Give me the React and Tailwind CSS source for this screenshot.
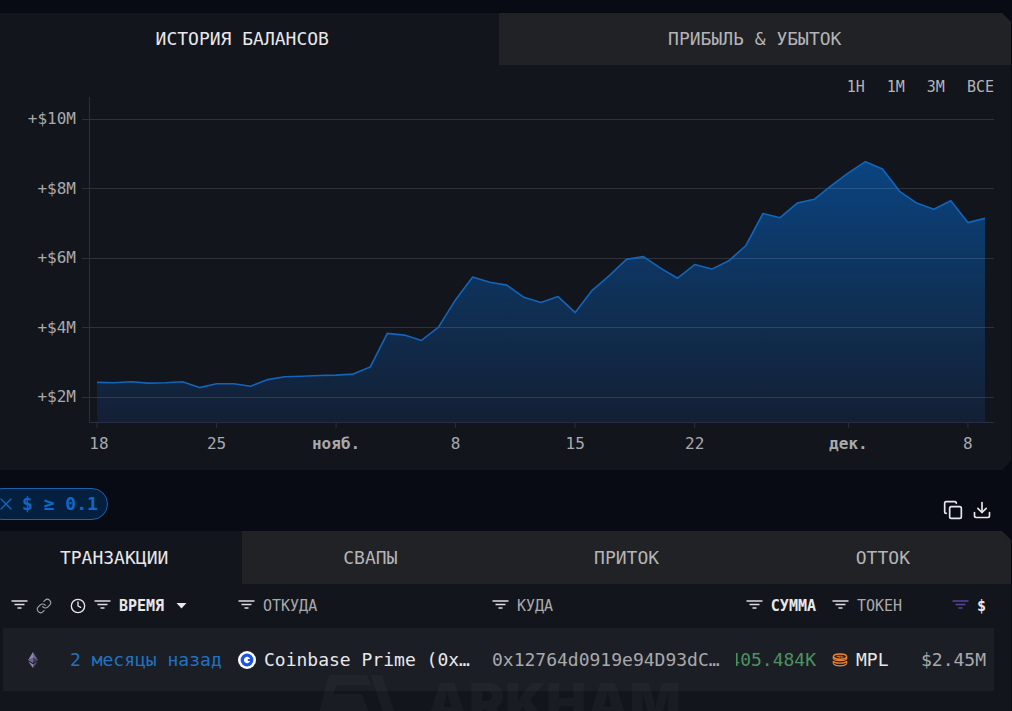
import React, { useState } from 'react';
import { Clock, Copy, Download, Link, X } from 'lucide-react';

// Daily balance in millions of dollars
const BALANCES = [
  2.42, 2.41, 2.44, 2.4, 2.41, 2.44, 2.27, 2.38, 2.38, 2.31, 2.5, 2.58, 2.6, 2.62, 2.63, 2.66, 2.86, 3.83,
  3.78, 3.63, 4.01, 4.8, 5.45, 5.3, 5.22, 4.87, 4.72, 4.89, 4.43, 5.07, 5.49, 5.96, 6.04, 5.71, 5.42, 5.81,
  5.68, 5.92, 6.36, 7.28, 7.16, 7.58, 7.69, 8.08, 8.45, 8.77, 8.56, 7.92, 7.58, 7.4, 7.65, 7.02, 7.14,
];

const X_TICKS = [
  { day: 0, label: '18', shift: 2 },
  { day: 7, label: '25' },
  { day: 14, label: 'нояб.', bold: true },
  { day: 21, label: '8' },
  { day: 28, label: '15' },
  { day: 35, label: '22' },
  { day: 44, label: 'дек.', bold: true },
  { day: 51, label: '8' },
];

const Y_TICKS = [10, 8, 6, 4, 2];
const RANGES = ['1Н', '1М', '3М', 'ВСЕ'];

const LEFT = 111;
const BOTTOM = 325;
const dayX = (day) => LEFT + (day * 888) / 52;
const valueY = (value) => 22 + (10 - value) * 34.75;

function BalanceChart() {
  const line = BALANCES.map((v, i) => `${dayX(i).toFixed(1)},${valueY(v).toFixed(1)}`).join(' ');
  const area = `${LEFT},${BOTTOM} ${line} ${dayX(52)},${BOTTOM}`;

  return (
    <svg viewBox="0 0 1025 373" className="block w-full" role="img" aria-label="История балансов">
      <defs>
        <linearGradient id="balance" x1="0" y1="0" x2="0" y2="1">
          <stop offset="0" stopColor="#0a4480" />
          <stop offset="0.5" stopColor="#0f3158" />
          <stop offset="1" stopColor="#131f34" />
        </linearGradient>
      </defs>
      <polygon points={area} fill="url(#balance)" />
      {Y_TICKS.map((tick) => (
        <g key={tick}>
          <line x1="96" x2="1008" y1={Math.floor(valueY(tick)) + 0.5} y2={Math.floor(valueY(tick)) + 0.5} stroke="#ffffff" strokeOpacity="0.12" />
          <text x="90" y={valueY(tick) + 5} textAnchor="end" fontSize="16" fill="#a8a9ac">+${tick}M</text>
        </g>
      ))}
      <polyline points={line} fill="none" stroke="#1165ba" strokeWidth="1.6" strokeLinejoin="round" />
      <path d="M103.5 0V325.5H1008" fill="none" stroke="#2b2d44" />
      {X_TICKS.map((tick) => (
        <g key={tick.day}>
          <line x1={dayX(tick.day)} x2={dayX(tick.day)} y1="326" y2="331" stroke="#2b2d3c" />
          <text
            x={dayX(tick.day) + (tick.shift || 0)}
            y="352"
            textAnchor="middle"
            fontSize="16"
            fontWeight={tick.bold ? 700 : 400}
            fill="#a8a9ac"
          >
            {tick.label}
          </text>
        </g>
      ))}
    </svg>
  );
}

function Tabs({ tabs, active, onChange, className }) {
  return (
    <div role="tablist" className={`flex ${className}`}>
      {tabs.map((tab, i) => (
        <button
          key={tab}
          type="button"
          role="tab"
          aria-selected={i === active}
          onClick={() => onChange(i)}
          className={`flex-1 text-lg leading-6 ${i === active ? 'text-[#e8e8ea]' : 'bg-[#212226] text-[#b4b4b6]'}`}
        >
          {tab}
        </button>
      ))}
    </div>
  );
}

function FilterButton({ label, className = 'text-[#dcdde0]' }) {
  return (
    <button type="button" aria-label={`Фильтр: ${label}`} className={`shrink-0 ${className}`}>
      <svg width="17" height="14" viewBox="0 0 17 14" fill="none" stroke="currentColor" strokeWidth="1.7">
        <path d="M0.5 2H16.5M3.5 5.5H13.5M6.5 9H10.5" />
      </svg>
    </button>
  );
}

function EthIcon() {
  return (
    <svg width="10" height="16" viewBox="0 0 10 16" role="img" aria-label="Ethereum">
      <path d="M5 0L0 8.2L5 6z" fill="#8f88ae" />
      <path d="M5 0L10 8.2L5 6z" fill="#6d6690" />
      <path d="M0 8.2L5 6V11z" fill="#6d6690" />
      <path d="M10 8.2L5 6V11z" fill="#453f66" />
      <path d="M0.3 9.4L5 12.2V16z" fill="#8f88ae" />
      <path d="M9.7 9.4L5 12.2V16z" fill="#5c557d" />
    </svg>
  );
}

function CoinbaseIcon() {
  return (
    <svg width="18" height="18" viewBox="0 0 18 18" className="shrink-0" aria-hidden="true">
      <circle cx="9" cy="9" r="9" fill="#ffffff" />
      <circle cx="9" cy="9" r="6.4" fill="#1a55e3" />
      <path d="M12.1 8A3.2 3.2 0 1 0 12.1 10H9.8V8z" fill="#ffffff" />
    </svg>
  );
}

function MapleIcon() {
  return (
    <svg width="16" height="14" viewBox="0 0 16 14" className="shrink-0" fill="none" stroke="#ee8433" aria-hidden="true">
      <ellipse cx="8" cy="3.6" rx="6.6" ry="2.7" strokeWidth="1.5" />
      <path d="M4.5 3.2H7.2V4.8M9 2.6V4H11.5" strokeWidth="1.1" />
      <path d="M1.4 5.6C2.4 8.4 13.6 8.4 14.6 5.6M1.4 8C2.4 10.8 13.6 10.8 14.6 8M1.4 10.4C2.4 13.6 13.6 13.6 14.6 10.4" strokeWidth="1.3" />
      <path d="M1.3 4V6M14.7 4V6M1.3 8V10.6M14.7 8V10.6" strokeWidth="1.2" />
    </svg>
  );
}

function Watermark() {
  return (
    <div aria-hidden="true" className="pointer-events-none absolute top-[144px] left-[332px] flex items-start gap-6 text-[#1a1c24]">
      <svg width="84" height="60" viewBox="0 0 84 60" fill="currentColor">
        <path d="M12 0H49L53 10H19L15 19H44L60 60H46L39 39H18L11 60H-4L9 6z" />
        <path d="M53 0H64L84 60H72z" />
      </svg>
      <span className="font-['Inter',sans-serif] text-[54px] leading-[56px] font-black">ARKHAM</span>
    </div>
  );
}

function TransactionsTable() {
  return (
    <table className="relative ml-[17px] w-[calc(100%-34px)] table-fixed border-collapse text-left whitespace-nowrap">
      <colgroup>
        <col className="w-[59px]" />
        <col className="w-[168px]" />
        <col className="w-[254px]" />
        <col />
        <col className="w-[88px]" />
        <col className="w-[87px]" />
        <col className="w-[83px]" />
      </colgroup>
      <thead className="text-[15px] leading-5 text-[#a8a9ac]">
        <tr className="h-11">
          <th className="pl-2 font-normal">
            <div className="flex items-center gap-2">
              <FilterButton label="сеть" />
              <Link size={16} strokeWidth={1.6} aria-label="Сеть" />
            </div>
          </th>
          <th className="pl-2 font-bold text-[#e8e8ea]">
            <div className="flex items-center gap-2">
              <Clock size={16} aria-hidden="true" />
              <FilterButton label="время" />
              <span>ВРЕМЯ</span>
              <svg width="11" height="6" viewBox="0 0 11 6" fill="currentColor" className="ml-1" aria-hidden="true">
                <path d="M0.5 0H10.5L5.5 5.5z" />
              </svg>
            </div>
          </th>
          <th className="pl-2 font-normal">
            <div className="flex items-center gap-2">
              <FilterButton label="откуда" />
              <span>ОТКУДА</span>
            </div>
          </th>
          <th className="pl-2 font-normal">
            <div className="flex items-center gap-2">
              <FilterButton label="куда" />
              <span>КУДА</span>
            </div>
          </th>
          <th className="pr-2 font-bold text-[#e8e8ea]">
            <div className="flex items-center justify-end gap-2">
              <FilterButton label="сумма" />
              <span>СУММА</span>
            </div>
          </th>
          <th className="pl-2 font-normal">
            <div className="flex items-center gap-2">
              <FilterButton label="токен" />
              <span>ТОКЕН</span>
            </div>
          </th>
          <th className="pr-2 font-bold text-[#e8e8ea]">
            <div className="flex items-center justify-end gap-2">
              <FilterButton label="стоимость" className="text-[#5a449c]" />
              <span>$</span>
            </div>
          </th>
        </tr>
      </thead>
      <tbody className="text-lg leading-6 text-[#a8a9ac]">
        <tr className="h-[63px] bg-white/4">
          <td>
            <div className="flex justify-center">
              <EthIcon />
            </div>
          </td>
          <td className="pl-2">
            <a href="#tx" className="text-[#2173c2]">2 месяцы назад</a>
          </td>
          <td className="pl-2">
            <a href="#from" className="flex items-center gap-2 text-[#e8e8ea]">
              <CoinbaseIcon />
              Coinbase Prime (0x…
            </a>
          </td>
          <td className="pl-2">
            <a href="#to">0x12764d0919e94D93dC…</a>
          </td>
          <td className="pr-2">
            <div className="flex justify-end overflow-hidden text-[#4b9362]">405.484K</div>
          </td>
          <td className="pl-2">
            <a href="#token" className="flex items-center gap-2 text-[#e8e8ea]">
              <MapleIcon />
              MPL
            </a>
          </td>
          <td className="pr-2 text-right">$2.45M</td>
        </tr>
      </tbody>
    </table>
  );
}

export default function App() {
  const [chartTab, setChartTab] = useState(0);
  const [listTab, setListTab] = useState(0);

  return (
    <div className="min-h-screen flex flex-col overflow-hidden bg-[#080b14] pt-[13px] pr-px font-['DejaVu_Sans_Mono',monospace]">
      <main className="-ml-[14px] flex flex-1 flex-col">
        <section className="bg-[#13151d] [clip-path:polygon(0_0,calc(100%-9px)_0,100%_9px,100%_calc(100%-9px),calc(100%-9px)_100%,0_100%)]">
          <Tabs tabs={['ИСТОРИЯ БАЛАНСОВ', 'ПРИБЫЛЬ & УБЫТОК']} active={chartTab} onChange={setChartTab} className="h-[52px]" />
          <div className="flex h-8 justify-end gap-[22px] pt-3 pr-[17px] text-[15px] leading-5 text-[#b4b4b6]">
            {RANGES.map((range) => (
              <button key={range} type="button">{range}</button>
            ))}
          </div>
          <BalanceChart />
        </section>

        <div className="flex h-[61px] items-start justify-between pt-[18px] pr-[19px]">
          <button type="button" className="flex h-8 items-center gap-[6px] rounded-full border border-[#1c61ae] bg-[#05203f] pr-[9px] pl-[9px] text-lg leading-6 font-bold text-[#1068c4]">
            <X size={20} strokeWidth={1.5} />
            $ ≥ 0.1
          </button>
          <div className="mt-3 flex gap-[9px] text-[#e8e8ea]">
            <button type="button" aria-label="Копировать"><Copy size={20} /></button>
            <button type="button" aria-label="Скачать"><Download size={20} /></button>
          </div>
        </div>

        <section className="relative flex-1 overflow-hidden bg-[#13151d] [clip-path:polygon(0_0,calc(100%-9px)_0,100%_9px,100%_100%,0_100%)]">
          <Tabs tabs={['ТРАНЗАКЦИИ', 'СВАПЫ', 'ПРИТОК', 'ОТТОК']} active={listTab} onChange={setListTab} className="h-[53px]" />
          <Watermark />
          <TransactionsTable />
        </section>
      </main>
    </div>
  );
}
